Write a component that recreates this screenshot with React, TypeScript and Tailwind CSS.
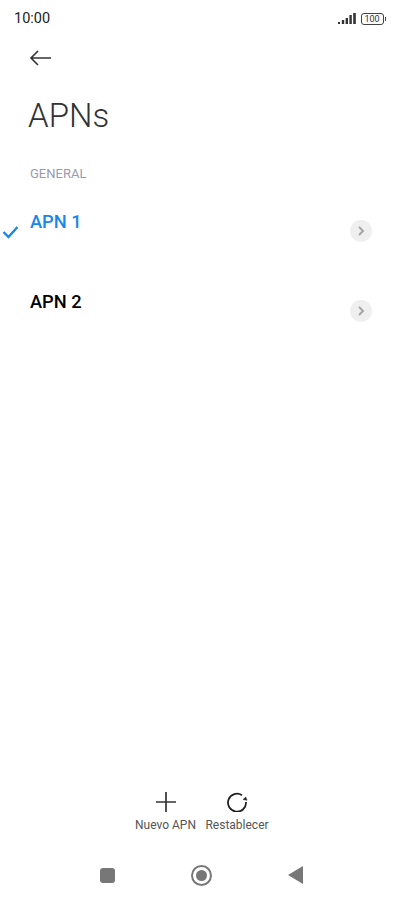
import React from 'react';

function Signal() {
  return (
    <svg width="18" height="12" viewBox="0 0 18 12" fill="#333">
      <rect x="0" y="9" width="2" height="2" />
      <rect x="3.8" y="7" width="2.4" height="4" />
      <rect x="7.6" y="5" width="2.4" height="6" />
      <rect x="11.4" y="2" width="2.4" height="9" />
      <rect x="15.2" y="0" width="2.6" height="11" />
    </svg>
  );
}

function Battery() {
  return (
    <div className="flex items-center">
      <div className="w-[23px] h-[12px] border border-[#444] rounded-[3px] flex items-center justify-center text-[9px] leading-none text-[#333]">
        100
      </div>
      <div className="w-[1.5px] h-[4px] bg-[#444] ml-[1px]" />
    </div>
  );
}

function Chevron() {
  return (
    <div className="w-[22px] h-[22px] rounded-full bg-[#efefef] flex items-center justify-center">
      <svg width="8" height="10" viewBox="0 0 8 10" fill="none" stroke="#a6a6a6" strokeWidth="2">
        <path d="M2 1l4 4-4 4" />
      </svg>
    </div>
  );
}

function ApnRow({ label, active }: { label: string; active?: boolean }) {
  return (
    <div className="relative h-[80px] pl-[30px] pr-[31px] flex justify-between">
      {active && (
        <svg className="absolute left-[2px] top-[15px]" width="17" height="14" viewBox="0 0 17 14" fill="none" stroke="#1a87e8" strokeWidth="2.4">
          <path d="M1.5 7l5 5L15.5 2" />
        </svg>
      )}
      <div className={`text-[18.3px] leading-[24px] font-medium ${active ? 'text-[#1a87e8]' : 'text-black'}`}>{label}</div>
      <div className="mt-[10px]">
        <Chevron />
      </div>
    </div>
  );
}

export default function App() {
  return (
    <div className="w-[403px] h-[900px] bg-white flex flex-col font-['Roboto',sans-serif] overflow-hidden">
      {/* status bar */}
      <div className="h-[38px] pl-[14px] pr-[17px] flex items-center justify-between">
        <span className="text-[14.5px] text-[#222]">10:00</span>
        <div className="flex items-center gap-[5px]">
          <Signal />
          <Battery />
        </div>
      </div>

      {/* back */}
      <div className="pl-[29px] mt-[9px] h-[22px] flex items-center">
        <svg width="23" height="16" viewBox="0 0 23 16" fill="none" stroke="#333" strokeWidth="1.6">
          <path d="M22 8H2M9 1L2 8l7 7" />
        </svg>
      </div>

      <h1 className="pl-[28px] mt-[25px] text-[33px] leading-[44px] font-light text-[#333]">APNs</h1>

      <div className="pl-[30px] mt-[28px] text-[13px] leading-[16px] text-[#9a9ab0]">GENERAL</div>

      <div className="mt-[28px]">
        <ApnRow label="APN 1" active />
        <ApnRow label="APN 2" />
      </div>

      <div className="flex-1" />

      {/* bottom actions */}
      <div className="flex justify-center gap-[10px] text-[12px] text-[#555]">
        <div className="flex flex-col items-center w-[61px]">
          <svg width="20" height="20" viewBox="0 0 20 20" fill="none" stroke="#333" strokeWidth="1.7">
            <path d="M10 0v20M0 10h20" />
          </svg>
          <span className="mt-[5px] leading-[16px] whitespace-nowrap">Nuevo APN</span>
        </div>
        <div className="flex flex-col items-center w-[62px]">
          <svg width="22" height="20" viewBox="0 0 22 20" fill="none" stroke="#222" strokeWidth="1.8">
            <path d="M16 3.2A9 9 0 1 0 20 10" />
            <path d="M17 7.5l2.8-2.4 1.2 3.2z" fill="#222" strokeWidth="0.5" />
          </svg>
          <span className="mt-[5px] leading-[16px] whitespace-nowrap">Restablecer</span>
        </div>
      </div>

      {/* nav bar */}
      <div className="h-[58px] mt-[9px] pt-[8px] flex items-center justify-center gap-[76px]">
        <div className="w-[15px] h-[15px] rounded-[3px] bg-[#777]" />
        <div className="w-[21px] h-[21px] rounded-full border-2 border-[#777] flex items-center justify-center">
          <div className="w-[11px] h-[11px] rounded-full bg-[#777]" />
        </div>
        <svg width="15" height="18" viewBox="0 0 15 18" fill="#777">
          <path d="M15 0v18L0 9z" />
        </svg>
      </div>
    </div>
  );
}
